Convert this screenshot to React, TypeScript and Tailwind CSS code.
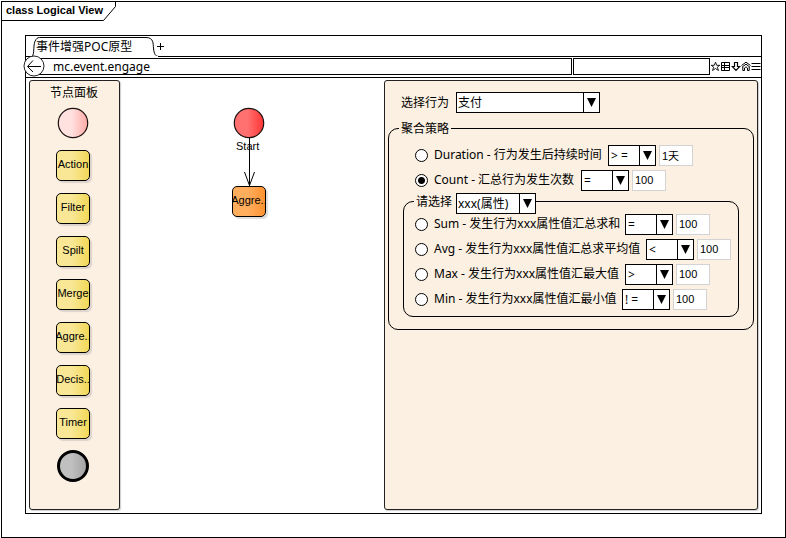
import React, { useState } from "react";

const uiFont = "font-['Noto_Sans','Noto_Sans_CJK_SC',sans-serif]";
const nodeFont = "font-['Liberation_Sans','Noto_Sans_CJK_SC',sans-serif]";

type ComboProps = {
  label: string;
  options: string[];
  className: string;
  textClass?: string;
};

function Combo({ label, options, className, textClass = "pl-px text-xs" }: ComboProps) {
  return (
    <span className={`grid h-[21px] shrink-0 grid-cols-[1fr_16px] border border-black bg-white ${className}`}>
      <select
        aria-label={label}
        className={`col-span-2 col-start-1 row-start-1 h-[19px] w-full appearance-none bg-transparent leading-[19px] outline-none ${textClass}`}
      >
        {options.map((o) => (
          <option key={o}>{o}</option>
        ))}
      </select>
      <span className="pointer-events-none col-start-2 row-start-1 flex items-center justify-center border-l border-black">
        <svg width="9" height="9" viewBox="0 0 9 9" aria-hidden="true">
          <path d="M0 0H9L4.500 9Z" fill="#000" />
        </svg>
      </span>
    </span>
  );
}

type Rule = {
  id: string;
  text: string;
  labelWidth: string;
  operator: string;
  value: string;
};

const mainRules: Rule[] = [
  { id: "duration", text: "Duration - 行为发生后持续时间", labelWidth: "w-[174px]", operator: "> =", value: "1天" },
  { id: "count", text: "Count - 汇总行为发生次数", labelWidth: "w-[147px]", operator: "=", value: "100" },
];

const attributeRules: Rule[] = [
  { id: "sum", text: "Sum - 发生行为xxx属性值汇总求和", labelWidth: "w-[191px]", operator: "=", value: "100" },
  { id: "avg", text: "Avg - 发生行为xxx属性值汇总求平均值", labelWidth: "w-[212px]", operator: "<", value: "100" },
  { id: "max", text: "Max - 发生行为xxx属性值汇最大值", labelWidth: "w-[191px]", operator: ">", value: "100" },
  { id: "min", text: "Min - 发生行为xxx属性值汇最小值", labelWidth: "w-[188px]", operator: "! =", value: "100" },
];

function RuleRow({ rule, selected, onSelect }: { rule: Rule; selected: string; onSelect: (id: string) => void }) {
  return (
    <div className="flex h-[21px] items-center">
      <input
        type="radio"
        id={rule.id}
        name="strategy"
        checked={selected === rule.id}
        onChange={() => onSelect(rule.id)}
        className="mr-1.5 size-[13px] shrink-0 appearance-none rounded-full border border-black bg-white checked:bg-[radial-gradient(circle,#000_3px,#fff_4px)]"
      />
      <label htmlFor={rule.id} className={`shrink-0 pb-0.5 whitespace-nowrap ${rule.labelWidth}`}>
        {rule.text}
      </label>
      <Combo
        label={`${rule.id} operator`}
        options={[rule.operator]}
        className="w-12"
        textClass="pl-0.5 text-xs"
      />
      <input
        type="text"
        aria-label={`${rule.id} value`}
        defaultValue={rule.value}
        className={`ml-[3px] h-[21px] w-[34px] border border-[#d3d3d3] bg-white pb-0.5 pl-0.5 text-[11px] outline-none ${nodeFont}`}
      />
    </div>
  );
}

const palette = ["Action", "Filter", "Spilt", "Merge", "Aggre..", "Decis..", "Timer"];

function StartCircle({ from, to, id }: { from: string; to: string; id: string }) {
  return (
    <svg width="32" height="32" viewBox="0 0 32 32" className="block" aria-hidden="true">
      <defs>
        <linearGradient id={id}>
          <stop offset="0.45" stopColor={from} />
          <stop offset="1" stopColor={to} />
        </linearGradient>
      </defs>
      <circle cx="16" cy="16" r="14.7" fill={`url(#${id})`} stroke="#1a1010" strokeWidth="1.2" />
    </svg>
  );
}

function Palette() {
  return (
    <aside className="flex w-[91px] shrink-0 flex-col items-center rounded-[3px] border border-[#222] bg-[#fbf0e1] pr-[3px] shadow-[1px_1px_1px_#ccc]">
      <h2 className="mt-0.5 h-5 pl-0.5 text-xs leading-5">节点面板</h2>
      <div className="mt-1">
        <StartCircle from="#ffe1e0" to="#ffaaa6" id="palette-start" />
      </div>
      <div className="mt-[11px] flex flex-col gap-3">
        {palette.map((name) => (
          <button
            key={name}
            type="button"
            className={`h-[31px] w-[34px] overflow-hidden rounded-[5px] border border-black bg-linear-to-r from-[#f9e795] from-45% to-[#f2d855] text-center text-[11px] whitespace-nowrap shadow-[2px_2px_1px_#ddd3cd] ${nodeFont}`}
          >
            <span className="-mx-1 block pb-0.5">{name}</span>
          </button>
        ))}
      </div>
      <svg width="34" height="34" viewBox="0 0 34 34" className="mt-[10px] block" aria-hidden="true">
        <defs>
          <linearGradient id="palette-end">
            <stop offset="0.45" stopColor="#c0c0c0" />
            <stop offset="1" stopColor="#a0a0a0" />
          </linearGradient>
        </defs>
        <circle cx="17" cy="17" r="14.5" fill="url(#palette-end)" stroke="#000" strokeWidth="3" />
      </svg>
    </aside>
  );
}

function Canvas() {
  return (
    <section aria-label="canvas" className={`relative flex-1 text-[11px] ${nodeFont}`}>
      <div className="absolute top-[27px] left-[113px]">
        <StartCircle from="#ff7070" to="#ff3535" id="canvas-start" />
      </div>
      <svg width="14" height="50" viewBox="0 0 14 50" className="absolute top-[57px] left-[122px]" aria-hidden="true">
        <path d="M7.5 1V49" stroke="#000" fill="none" />
        <path d="M2.5 35L7.5 48.5L12.5 35" stroke="#000" fill="none" />
      </svg>
      <span className="absolute top-[59px] left-[116px] leading-[14px]">Start</span>
      <button
        type="button"
        className="absolute top-[106px] left-28 h-[31px] w-[34px] overflow-hidden rounded-[5px] border border-black bg-linear-to-r from-[#ffae5e] from-45% to-[#ff922e] whitespace-nowrap shadow-[2px_2px_1px_#ddd]"
      >
        <span className="-mx-1 block pb-0.5">Aggre..</span>
      </button>
    </section>
  );
}

function Properties() {
  const [selected, setSelected] = useState("count");
  return (
    <section className="w-[374px] shrink-0 rounded-[3px] border border-[#222] bg-[#fbf0e1] px-[3px] pt-[11px] text-xs shadow-[1px_1px_1px_#ccc]">
      <div className="flex h-[21px] items-center pl-[13px]">
        <span className="w-[55px]">选择行为</span>
        <Combo label="选择行为" options={["支付"]} className="w-36" />
      </div>
      <fieldset className="mt-1.5 rounded-[10px] border border-black pb-3">
        <legend className="ml-2.5 h-[19px] px-0.5 leading-[19px]">聚合策略</legend>
        <div className="flex flex-col gap-1 pt-[7px] pl-[26px]">
          {mainRules.map((r) => (
            <RuleRow key={r.id} rule={r} selected={selected} onSelect={setSelected} />
          ))}
        </div>
        <fieldset className="mx-3.5 mt-0.5 rounded-[10px] border border-black pb-1.5">
          <legend className="ml-2.5 flex h-[17px] items-start pl-0.5">
            <span className="w-10 leading-[17px]">请选择</span>
            <Combo label="请选择" options={["xxx(属性)"]} className="w-20" />
          </legend>
          <div className="flex flex-col gap-1 pt-1 pl-[11px]">
            {attributeRules.map((r) => (
              <RuleRow key={r.id} rule={r} selected={selected} onSelect={setSelected} />
            ))}
          </div>
        </fieldset>
      </fieldset>
    </section>
  );
}

const toolIcons: { name: string; art: React.ReactNode }[] = [
  {
    name: "Favorites",
    art: <path d="M4.500 1.200L5.700 4.300H8.800L6.300 6.200L7.500 9.500L4.500 7.500L1.500 9.500L2.700 6.200L0.200 4.300H3.300Z" strokeWidth="0.9" />,
  },
  { name: "List", art: <path d="M0.5 1.5H8.5V9.5H0.5ZM3.5 1.5V9.5M0.5 4.5H8.5M0.5 6.5H8.5" /> },
  { name: "Downloads", art: <path d="M3.5 1.5H6.5V5.5H8.8L5 9.5L1.200 5.5H3.5Z" strokeWidth="1.2" /> },
  {
    name: "Home",
    art: <path d="M0.5 4.5L5 1.200L9.5 4.5M1.2 6L5 3.200L8.8 6M1.8 6V9.5H3.5V7L5 5.800L6.5 7V9.5H8.200V6" />,
  },
  { name: "Menu", art: <path d="M0.5 2.5H9.5M0.5 5.5H9.5M0.5 8.5H9.5" /> },
];

function BrowserChrome() {
  return (
    <header>
      <div className="flex h-[21px] border-b border-black pl-1.5">
        <div className="relative z-10 h-[21px] w-[127px]">
          <svg width="127" height="21" viewBox="0 0 127 21" className="absolute inset-0" aria-hidden="true">
            <path
              d="M0 20.5C3 18 0.5 8 4 3.5C5.5 1.5 6.5 1.5 9 1.5H114C122 1.5 121 8 121.5 12C122 18 123.500 20.5 127 20.5"
              fill="#fff"
              stroke="#000"
            />
            <path d="M1 20.500H126" stroke="#fff" />
          </svg>
          <span className="relative block pl-1 text-xs leading-[21px] whitespace-nowrap">事件增强POC原型</span>
        </div>
        <button type="button" aria-label="New tab" className="h-5 w-2">
          <svg width="7" height="7" viewBox="0 0 7 7" className="-ml-0.5" aria-hidden="true">
            <path d="M3.500 0V7M0 3.500H7" stroke="#000" />
          </svg>
        </button>
      </div>
      <div className="flex h-[21px] items-start border-b border-black pt-px">
        <button type="button" aria-label="Back" className="relative z-10 -mt-[3px] -ml-[3px] h-[22px] w-[22px]">
          <svg width="22" height="22" viewBox="0 0 22 22" className="block" aria-hidden="true">
            <circle cx="11" cy="11" r="10" fill="#fff" stroke="#222" />
            <path d="M18 11.500H5M10 5.500L4.500 11.500L10 17" fill="none" stroke="#000" />
          </svg>
        </button>
        <input
          type="text"
          aria-label="Address"
          defaultValue="mc.event.engage"
          className="-ml-3 h-[17px] min-w-0 flex-1 border border-black pl-[19px] text-xs leading-[15px] outline-none"
        />
        <input
          type="search"
          aria-label="Search"
          className="ml-px h-[17px] w-[137px] border border-black px-1 text-xs outline-none"
        />
        <div className="flex h-[17px] items-center pl-px">
          {toolIcons.map((icon) => (
            <button key={icon.name} type="button" aria-label={icon.name}>
              <svg width="10" height="11" viewBox="0 0 10 11" fill="none" stroke="#000" className="block" aria-hidden="true">
                {icon.art}
              </svg>
            </button>
          ))}
        </div>
      </div>
    </header>
  );
}

export default function App() {
  return (
    <div className={`flex min-h-screen flex-col bg-white pt-px pl-px text-black ${uiFont}`}>
      <div className="flex flex-1 flex-col border border-black">
        <div className="relative h-[19px]">
          <svg width="115" height="19" viewBox="0 0 115 19" className="absolute inset-0" aria-hidden="true">
            <path d="M0 18.500H101.500L113.500 4.500V0" fill="none" stroke="#000" />
          </svg>
          <h1 className="relative pl-1 text-[11px] leading-[17px] font-bold font-['Liberation_Sans',sans-serif]">
            class Logical View
          </h1>
        </div>
        <main className="mx-[23px] mt-3.5 mb-[23px] flex flex-1 flex-col border border-black">
          <BrowserChrome />
          <div className="flex flex-1 px-[3px] pt-0.5 pb-[3px]">
            <Palette />
            <Canvas />
            <Properties />
          </div>
        </main>
      </div>
    </div>
  );
}
